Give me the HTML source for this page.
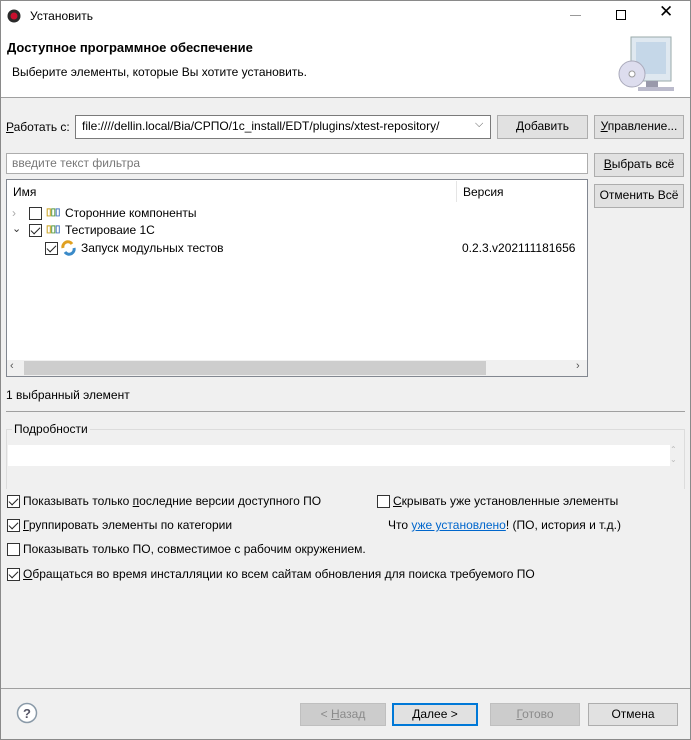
<!DOCTYPE html><html><head><meta charset="utf-8"><style>
*{box-sizing:border-box}
body{margin:0;width:691px;height:740px;background:#f0f0f0;font-family:"Liberation Sans","Noto Sans CJK SC",sans-serif;font-size:12px;color:#000;position:relative;overflow:hidden}
.a{position:absolute;white-space:nowrap}
.btn{position:absolute;background:#e1e1e1;border:1px solid #adadad;text-align:center;line-height:21px;font-size:12px}
.dis{background:#cccccc;border-color:#bfbfbf;color:#8a8a8a}
.cb{position:absolute;width:13px;height:13px;border:1px solid #333;background:#fff}
.cb.on::after{content:"";position:absolute;left:3px;top:0px;width:4px;height:8px;border:solid #222;border-width:0 1.5px 1.5px 0;transform:rotate(45deg)}
u{text-decoration:underline}
</style></head><body>
<div class="a" style="left:0;top:0;width:691px;height:740px;border:1px solid #8a8a8a;pointer-events:none;z-index:9"></div>
<div class="a" style="left:0;top:0;width:691px;height:97px;background:#fff"></div>
<div class="a" style="left:0;top:97px;width:691px;height:1px;background:#a0a0a0"></div>
<svg class="a" style="left:7px;top:9px" width="14" height="14"><circle cx="7" cy="7" r="6.5" fill="#2a2a2a"/><circle cx="7" cy="7" r="3.5" fill="#c8102e"/></svg>
<div class="a" style="left:30px;top:9px;font-size:12px">Установить</div>
<div class="a" style="left:570px;top:15px;width:11px;height:1px;background:#999"></div>
<div class="a" style="left:616px;top:10px;width:10px;height:10px;border:1px solid #000"></div>
<div class="a" style="left:659px;top:2px;font-size:17px;font-weight:300">✕</div>
<div class="a" style="left:7px;top:40px;font-size:13px;font-weight:bold">Доступное программное обеспечение</div>
<div class="a" style="left:12px;top:65px">Выберите элементы, которые Вы хотите установить.</div>
<svg class="a" style="left:618px;top:34px" width="73" height="62"><rect x="13" y="3" width="40" height="44" fill="#dfe8f0" stroke="#9aa" /><rect x="18" y="8" width="30" height="32" fill="#c5d7e8"/><rect x="28" y="47" width="12" height="6" fill="#99a"/><rect x="20" y="53" width="36" height="4" fill="#bbc"/><circle cx="14" cy="40" r="13" fill="#dde" stroke="#aab"/><circle cx="14" cy="40" r="3" fill="#fff" stroke="#999"/></svg>

<div class="a" style="left:6px;top:120px"><u>Р</u>аботать с:</div>
<div class="a" style="left:75px;top:115px;width:416px;height:24px;background:#fff;border:1px solid #7a7a7a;padding:3px 6px;font-size:12px">file:////dellin.local/Bia/СРПО/1c_install/EDT/plugins/xtest-repository/</div>
<div class="a" style="left:475px;top:118px;color:#555;font-size:11px">⌵</div>
<div class="btn" style="left:497px;top:115px;width:91px;height:24px"><u>Д</u>обавить</div>
<div class="btn" style="left:594px;top:115px;width:90px;height:24px"><u>У</u>правление...</div>

<div class="a" style="left:6px;top:153px;width:582px;height:21px;background:#fff;border:1px solid #adadad;padding:2px 5px;color:#777">введите текст фильтра</div>
<div class="btn" style="left:594px;top:153px;width:90px;height:24px"><u>В</u>ыбрать всё</div>
<div class="btn" style="left:594px;top:184px;width:90px;height:24px">Отменить Всё</div>

<div class="a" style="left:6px;top:179px;width:582px;height:198px;background:#fff;border:1px solid #828790"></div>
<div class="a" style="left:13px;top:185px">Имя</div>
<div class="a" style="left:456px;top:181px;width:1px;height:21px;background:#e5e5e5"></div>
<div class="a" style="left:463px;top:185px">Версия</div>
<div class="a" style="left:12px;top:206px;color:#aaa;font-size:12px">›</div>
<div class="cb" style="left:29px;top:207px"></div>
<div class="a" style="left:46px;top:207px;font-size:10px;font-weight:bold;letter-spacing:-1px"><span style="color:#c9a020">▯</span><span style="color:#5a9a40">▯</span><span style="color:#4a7ac0">▯</span></div>
<div class="a" style="left:65px;top:206px">Сторонние компоненты</div>
<div class="a" style="left:12px;top:222px;color:#333;font-size:11px">⌄</div>
<div class="cb on" style="left:29px;top:224px"></div>
<div class="a" style="left:46px;top:224px;font-size:10px;font-weight:bold;letter-spacing:-1px"><span style="color:#c9a020">▯</span><span style="color:#5a9a40">▯</span><span style="color:#4a7ac0">▯</span></div>
<div class="a" style="left:65px;top:223px">Тестироваие 1С</div>
<div class="cb on" style="left:45px;top:242px"></div>
<svg class="a" style="left:61px;top:240px" width="15" height="16"><path d="M2 8 A5 5 0 0 1 11 4" stroke="#e0a020" stroke-width="3" fill="none"/><path d="M13 8 A5 5 0 0 1 4 12" stroke="#3a8ac8" stroke-width="3" fill="none"/></svg>
<div class="a" style="left:81px;top:241px">Запуск модульных тестов</div>
<div class="a" style="left:462px;top:241px">0.2.3.v202111181656</div>
<div class="a" style="left:7px;top:360px;width:580px;height:16px;background:#f0f0f0"></div>
<div class="a" style="left:24px;top:361px;width:462px;height:14px;background:#cdcdcd"></div>
<div class="a" style="left:10px;top:360px;color:#555;font-size:11px">‹</div>
<div class="a" style="left:576px;top:360px;color:#555;font-size:11px">›</div>

<div class="a" style="left:6px;top:388px">1 выбранный элемент</div>
<div class="a" style="left:6px;top:411px;width:679px;height:1px;background:#a0a0a0"></div>
<div class="a" style="left:6px;top:429px;width:679px;height:60px;border:1px solid #dcdcdc;border-bottom:none"></div>
<div class="a" style="left:12px;top:422px;background:#f0f0f0;padding:0 2px">Подробности</div>
<div class="a" style="left:8px;top:445px;width:662px;height:21px;background:#fff"></div>
<div class="a" style="left:670px;top:445px;color:#bbb;font-size:8px;line-height:10px">⌃<br>⌄</div>

<div class="cb on" style="left:7px;top:495px"></div><div class="a" style="left:23px;top:494px">Показывать только <u>п</u>оследние версии доступного ПО</div>
<div class="cb" style="left:377px;top:495px"></div><div class="a" style="left:393px;top:494px"><u>С</u>крывать уже установленные элементы</div>
<div class="cb on" style="left:7px;top:519px"></div><div class="a" style="left:23px;top:518px"><u>Г</u>руппировать элементы по категории</div>
<div class="a" style="left:388px;top:518px">Что <span style="color:#0066cc;text-decoration:underline">уже установлено</span>! (ПО, история и т.д.)</div>
<div class="cb" style="left:7px;top:543px"></div><div class="a" style="left:23px;top:542px">Показывать только ПО, совместимое с рабочим окружением.</div>
<div class="cb on" style="left:7px;top:568px"></div><div class="a" style="left:23px;top:567px"><u>О</u>бращаться во время инсталляции ко всем сайтам обновления для поиска требуемого ПО</div>

<div class="a" style="left:0;top:688px;width:691px;height:1px;background:#a0a0a0"></div>
<svg class="a" style="left:16px;top:702px" width="22" height="22"><circle cx="11" cy="11" r="9.5" fill="#fff" stroke="#8a9aa8" stroke-width="1.5"/><text x="11" y="16" text-anchor="middle" font-family="Liberation Sans" font-size="13" font-weight="bold" fill="#556">?</text></svg>
<div class="btn dis" style="left:300px;top:703px;width:86px;height:23px">&lt; <u>Н</u>азад</div>
<div class="btn" style="left:392px;top:703px;width:86px;height:23px;border:2px solid #0078d7;line-height:19px"><u>Д</u>алее &gt;</div>
<div class="btn dis" style="left:490px;top:703px;width:90px;height:23px"><u>Г</u>отово</div>
<div class="btn" style="left:588px;top:703px;width:90px;height:23px">Отмена</div>
</body></html>
